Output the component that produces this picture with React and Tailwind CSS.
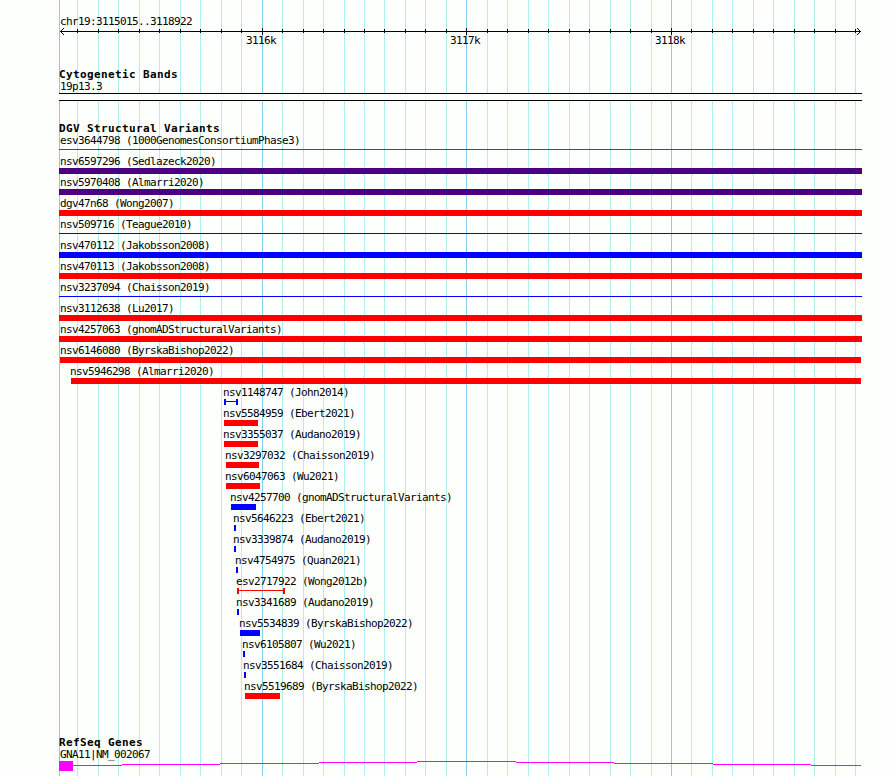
const REGION_START = 3115015;
const PX_PER_BASE = 0.2047;

const variants = [
  { id: "esv3644798", study: "1000GenomesConsortiumPhase3", start: 59, end: 862, color: "bg-[#ff0000]", shape: "line" },
  { id: "nsv6597296", study: "Sedlazeck2020", start: 59, end: 862, color: "bg-[#4b0082]" },
  { id: "nsv5970408", study: "Almarri2020", start: 59, end: 862, color: "bg-[#4b0082]" },
  { id: "dgv47n68", study: "Wong2007", start: 59, end: 862, color: "bg-[#ff0000]" },
  { id: "nsv509716", study: "Teague2010", start: 59, end: 862, color: "bg-[#0000ff]", shape: "line" },
  { id: "nsv470112", study: "Jakobsson2008", start: 59, end: 862, color: "bg-[#0000ff]" },
  { id: "nsv470113", study: "Jakobsson2008", start: 59, end: 862, color: "bg-[#ff0000]" },
  { id: "nsv3237094", study: "Chaisson2019", start: 59, end: 862, color: "bg-[#0000ff]", shape: "line" },
  { id: "nsv3112638", study: "Lu2017", start: 59, end: 862, color: "bg-[#ff0000]" },
  { id: "nsv4257063", study: "gnomADStructuralVariants", start: 59, end: 862, color: "bg-[#ff0000]" },
  { id: "nsv6146080", study: "ByrskaBishop2022", start: 60, end: 861, color: "bg-[#ff0000]" },
  { id: "nsv5946298", study: "Almarri2020", start: 71, end: 861, color: "bg-[#ff0000]" },
  { id: "nsv1148747", study: "John2014", start: 224, end: 238, color: "bg-[#0000ff]", shape: "span" },
  { id: "nsv5584959", study: "Ebert2021", start: 224, end: 258, color: "bg-[#ff0000]" },
  { id: "nsv3355037", study: "Audano2019", start: 224, end: 258, color: "bg-[#ff0000]" },
  { id: "nsv3297032", study: "Chaisson2019", start: 226, end: 259, color: "bg-[#ff0000]" },
  { id: "nsv6047063", study: "Wu2021", start: 226, end: 260, color: "bg-[#ff0000]" },
  { id: "nsv4257700", study: "gnomADStructuralVariants", start: 231, end: 256, color: "bg-[#0000ff]" },
  { id: "nsv5646223", study: "Ebert2021", start: 234, end: 236, color: "bg-[#0000ff]" },
  { id: "nsv3339874", study: "Audano2019", start: 234, end: 236, color: "bg-[#0000ff]" },
  { id: "nsv4754975", study: "Quan2021", start: 236, end: 238, color: "bg-[#0000ff]" },
  { id: "esv2717922", study: "Wong2012b", start: 237, end: 285, color: "bg-[#ff0000]", shape: "span" },
  { id: "nsv3341689", study: "Audano2019", start: 237, end: 239, color: "bg-[#0000ff]" },
  { id: "nsv5534839", study: "ByrskaBishop2022", start: 240, end: 260, color: "bg-[#0000ff]" },
  { id: "nsv6105807", study: "Wu2021", start: 243, end: 245, color: "bg-[#0000ff]" },
  { id: "nsv3551684", study: "Chaisson2019", start: 244, end: 246, color: "bg-[#0000ff]" },
  { id: "nsv5519689", study: "ByrskaBishop2022", start: 245, end: 280, color: "bg-[#ff0000]" },
];

// one tick every 100 bases, a major one every 1000
const ticks = Array.from({ length: 39 }, (_, i) => {
  const pos = 3115100 + i * 100;
  return {
    x: Math.round(60 + (pos - REGION_START) * PX_PER_BASE),
    major: pos % 1000 === 0,
  };
});

const GridLines = () => (
  <svg
    className="absolute left-0 top-0"
    width="890"
    height="776"
    shapeRendering="crispEdges"
  >
    <rect x="59" y="0" width="1" height="776" fill="#87ceeb" />
    {ticks.map((t) => (
      <rect key={t.x} x={t.x} y="0" width="1" height="776" fill={t.major ? "#87ceeb" : "#afeeee"} />
    ))}
  </svg>
);

const Label = ({ children }) => (
  <div className="h-[13px] whitespace-pre pl-px text-[11px] leading-[13px] tracking-[-0.622px]">
    {children}
  </div>
);

const TrackTitle = ({ children }) => (
  <h2 className="h-3 whitespace-pre text-[11px] font-bold leading-[13px] tracking-[0.378px]">
    {children}
  </h2>
);

const Ruler = () => (
  <div>
    <Label>chr19:3115015..3118922</Label>
    <svg
      className="block h-1.5 w-[803px] overflow-visible"
      viewBox="59 28 803 6"
      shapeRendering="crispEdges"
    >
      <rect x="60" y="31" width="801" height="1" />
      {ticks.map((t) => (
        <rect key={t.x} x={t.x} y={t.major ? 28 : 29} width="1" height={t.major ? 7 : 4} />
      ))}
      {[1, 2, 3].map((d) => (
        <g key={d}>
          <rect x={60 + d} y={31 - d} width="1" height="1" />
          <rect x={60 + d} y={31 + d} width="1" height="1" />
          <rect x={860 - d} y={31 - d} width="1" height="1" />
          <rect x={860 - d} y={31 + d} width="1" height="1" />
        </g>
      ))}
    </svg>
    <div className="flex pl-[186px]">
      <div className="w-[204px]">
        <Label>3116k</Label>
      </div>
      <div className="w-[205px]">
        <Label>3117k</Label>
      </div>
      <Label>3118k</Label>
    </div>
  </div>
);

const Feature = ({ variant }) => {
  const { start, end, color, shape } = variant;
  const style = { marginLeft: start - 59, width: end - start };

  if (shape === "line") {
    return (
      <div className="h-2 pt-0.5">
        <div className={`h-px ${color}`} style={style} />
      </div>
    );
  }
  if (shape === "span") {
    return (
      <div className="h-2">
        <div className="flex h-1.5" style={style}>
          <div className={`w-0.5 ${color}`} />
          <div className={`mt-0.5 h-px flex-1 ${color}`} />
          <div className={`w-0.5 ${color}`} />
        </div>
      </div>
    );
  }
  return (
    <div className="h-2">
      <div className={`h-1.5 ${color}`} style={style} />
    </div>
  );
};

const VariantRow = ({ variant }) => (
  <div className="h-[21px]">
    <div style={{ paddingLeft: Math.max(0, variant.start - 61) }}>
      <Label>
        {variant.id} ({variant.study})
      </Label>
    </div>
    <Feature variant={variant} />
  </div>
);

const Gene = () => (
  <svg className="block h-[15px] w-[803px]" viewBox="59 761 803 15" shapeRendering="crispEdges" fill="#ff00ff">
    <rect x="59" y="761" width="14" height="10" />
    <rect x="73" y="765" width="49" height="1" />
    <rect x="122" y="764" width="98" height="1" />
    <rect x="220" y="763" width="99" height="1" />
    <rect x="319" y="762" width="98" height="1" />
    <rect x="417" y="761" width="99" height="1" />
    <rect x="516" y="762" width="98" height="1" />
    <rect x="614" y="763" width="99" height="1" />
    <rect x="713" y="764" width="98" height="1" />
    <rect x="811" y="765" width="50" height="1" />
  </svg>
);

export default function App() {
  return (
    <div className="relative h-[776px] w-[890px] overflow-hidden bg-[#fdfffc] font-['DejaVu_Sans_Mono',monospace] text-black">
      <GridLines />
      <main className="relative w-[862px] pl-[59px] pt-[15px]">
        <Ruler />

        <section className="mt-[21px]">
          <TrackTitle>Cytogenetic Bands</TrackTitle>
          <Label>19p13.3</Label>
          <div className="h-2 border-y border-black bg-[#fdfffc]" />
        </section>

        <section className="mt-[21px]">
          <TrackTitle>DGV Structural Variants</TrackTitle>
          {variants.map((v) => (
            <VariantRow key={v.id} variant={v} />
          ))}
        </section>

        <section className="mt-[35px]">
          <TrackTitle>RefSeq Genes</TrackTitle>
          <Label>GNA11|NM_002067</Label>
          <Gene />
        </section>
      </main>
    </div>
  );
}
